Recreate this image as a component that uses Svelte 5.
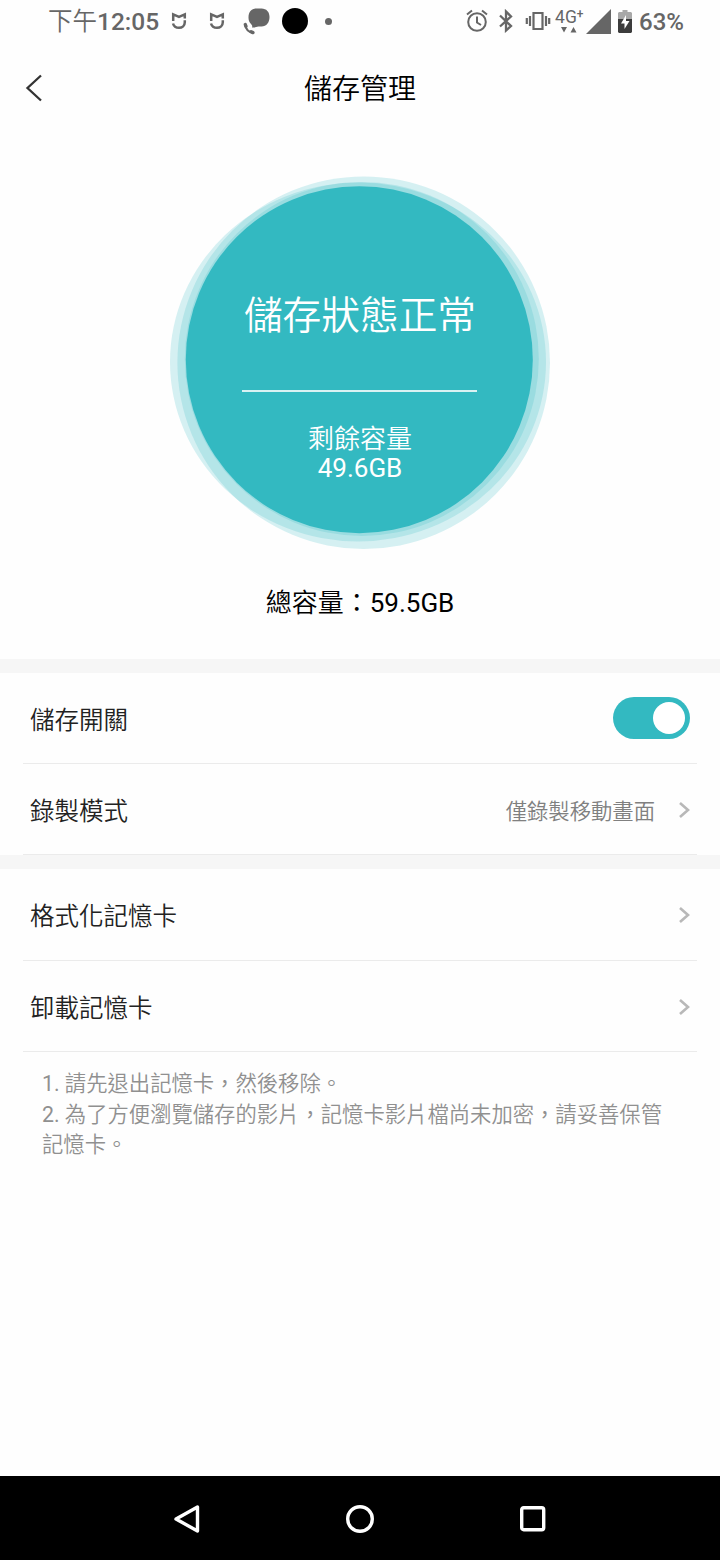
<script lang="ts">
  let recording = true;

  const notes = [
    '請先退出記憶卡，然後移除。',
    '為了方便瀏覽儲存的影片，記憶卡影片檔尚未加密，請妥善保管記憶卡。',
  ];
</script>

{#snippet mi()}
  <svg class="mi" width="16" height="18" viewBox="0 0 16 18">
    <path d="M2.200 9V2.300L8 4.800l5.800-2.500V6.500M13.800 8.200v2.100c0 3.200-2.600 5.500-5.800 5.500-2.900 0-5.200-1.500-6-4.300" />
  </svg>
{/snippet}

{#snippet chevron()}
  <svg class="chevron" width="12" height="18" viewBox="0 0 12 18"><path d="M2 2l8 7-8 7" /></svg>
{/snippet}

<div class="screen">
  <div class="status">
    <span class="clock">下午<b>12:05</b></span>
    {@render mi()}
    {@render mi()}
    <svg class="call" width="28" height="28" viewBox="0 0 28 28">
      <path d="M14.500 1.500h5c5 0 8 3.500 8 8.500 0 5.500-3 9.500-8 9.500h-3c-2.500 0-3.500 1.500-6.500 1 .5-1.300.3-2-1-3.500C7 15 6.500 13 6.500 10.500c0-5.500 3-9 8-9z" fill="#666" />
      <path d="M3 17.500c.7 4.500 3.800 7.800 8.500 8.500" fill="none" stroke="#666" stroke-width="2" />
      <path d="M3.300 17.500l.7 1.800M9.200 24.800l1.800.8" stroke="#666" stroke-width="3.400" stroke-linecap="round" />
    </svg>
    <span class="disc"></span>
    <span class="dot"></span>
    <div class="system">
      <svg class="alarm" width="22" height="24" viewBox="0 0 22 24">
        <g fill="none" stroke="#666" stroke-width="2">
          <circle cx="11" cy="13" r="8.800" />
          <path d="M11 7.500v6l4 2.500M1 5.500l5-4M21 5.500l-5-4" />
        </g>
      </svg>
      <svg class="bluetooth" width="16" height="24" viewBox="0 0 16 24">
        <path d="M2 6.500L13 17l-5 4.500v-19L13 7.500 2 17.500" fill="none" stroke="#666" stroke-width="2.300" />
      </svg>
      <svg class="vibrate" width="26" height="20" viewBox="0 0 26 20">
        <path d="M8.500 2h9v16h-9zM5 5v10M1.800 7v6M21 5v10M24.200 7v6" fill="none" stroke="#666" stroke-width="2.200" />
      </svg>
      <div class="network">
        <span>4G<sup>+</sup></span>
        <svg width="16" height="6" viewBox="0 0 16 6"><path d="M0 0h6L3 5.500zM9.500 5.500h6L12.500 0z" fill="#666" /></svg>
      </div>
      <svg class="signal" width="25" height="25" viewBox="0 0 25 25"><path d="M0 25L25 0v25z" fill="#666" /></svg>
      <svg class="battery" width="14" height="23" viewBox="0 0 14 23">
        <path d="M1 2h3.500V0h5v2H13l1 1v6H0V3z" fill="#a8a8a8" />
        <path d="M0 9h14v13l-1 1H1l-1-1z" fill="#3c3c3c" />
        <path d="M8 5l-5 8.500h3.500V19l5-8H8z" fill="#fff" />
      </svg>
      <b class="percent">63%</b>
    </div>
  </div>

  <header>
    <svg class="back" width="18" height="28" viewBox="0 0 18 28"><path d="M16 1.500L2.500 14 16 26.500" /></svg>
    <h1>儲存管理</h1>
  </header>

  <section class="summary">
    <div class="gauge">
      <svg class="rings" width="380" height="374" viewBox="170 176 380 374">
        <circle cx="363.700" cy="362.700" r="186.300" />
        <ellipse cx="358" cy="362" rx="188" ry="179.500" />
        <circle cx="361.800" cy="358.900" r="177" />
        <circle class="core" cx="359.300" cy="359.700" r="173.500" />
      </svg>
      <div class="state">儲存狀態正常</div>
      <div class="rule"></div>
      <div class="free">剩餘容量<span>49.6GB</span></div>
    </div>
    <p class="total">總容量：<span>59.5GB</span></p>
  </section>

  <section class="group">
    <div class="row">
      <span>儲存開關</span>
      <button
        class="toggle"
        class:on={recording}
        type="button"
        role="switch"
        aria-checked={recording}
        aria-label="儲存開關"
        on:click={() => (recording = !recording)}
      >
        <i></i>
      </button>
    </div>
    <div class="row">
      <span>錄製模式</span>
      <span class="value">僅錄製移動畫面</span>
      {@render chevron()}
    </div>
  </section>

  <section class="group card">
    <div class="row">
      <span>格式化記憶卡</span>
      {@render chevron()}
    </div>
    <div class="row">
      <span>卸載記憶卡</span>
      {@render chevron()}
    </div>
  </section>

  <div class="notes">
    {#each notes as note, i}
      <p><span>{i + 1}.</span> {note}</p>
    {/each}
  </div>

  <nav>
    <svg width="28" height="30" viewBox="0 0 28 30"><path d="M24.500 3v24L3 15z" /></svg>
    <svg width="30" height="30" viewBox="0 0 30 30"><circle cx="15" cy="15" r="12.300" /></svg>
    <svg width="28" height="28" viewBox="0 0 28 28"><rect x="2.700" y="2.700" width="22" height="22" rx="2" /></svg>
  </nav>
</div>

<style>
  :global(body) {
    margin: 0;
    background: #fefefe;
  }

  .screen {
    width: 720px;
    height: 1560px;
    display: flex;
    flex-direction: column;
    background: #fefefe;
    color: #000;
    font-family: Roboto, 'Noto Sans CJK TC', sans-serif;
    font-weight: 350;
    overflow: hidden;
  }

  svg {
    display: block;
    flex: none;
  }

  .status {
    height: 42px;
    flex: none;
    display: flex;
    align-items: center;
    padding: 0 36px 0 48px;
    color: #666;
    font-size: 24.500px;
  }

  .clock {
    width: 123px;
    white-space: nowrap;
    line-height: 42px;
    padding-top: 1px;
    box-sizing: border-box;
    height: 42px;
  }

  .status b {
    font-weight: 500;
  }

  .mi {
    margin-right: 22px;
  }

  .mi path {
    fill: none;
    stroke: #666;
    stroke-width: 2.500px;
  }

  .call {
    margin-left: -5px;
  }

  .disc {
    width: 26px;
    height: 26px;
    border-radius: 50%;
    background: #000;
    margin-left: 12px;
  }

  .dot {
    width: 7px;
    height: 7px;
    border-radius: 50%;
    background: #666;
    margin-left: 17px;
  }

  .system {
    margin-left: auto;
    display: flex;
    align-items: center;
  }

  .bluetooth {
    margin-left: 10px;
  }

  .vibrate {
    margin-left: 11px;
  }

  .network {
    width: 31px;
    height: 26px;
    margin-left: 4px;
    font-size: 17.500px;
    font-weight: 400;
    line-height: 18px;
    white-space: nowrap;
  }

  .network span {
    display: block;
    height: 19px;
  }

  .network sup {
    font-size: 12px;
    font-weight: 500;
    line-height: 0;
    vertical-align: 5px;
  }

  .network svg {
    margin-left: 6px;
  }

  .battery {
    margin-left: 7px;
  }

  .percent {
    margin-left: 7px;
    padding-top: 2px;
    font-size: 24px;
  }

  header {
    height: 92px;
    flex: none;
    display: grid;
    grid-template-columns: 1fr auto 1fr;
    align-items: center;
    padding: 0 25px;
  }

  .back path {
    fill: none;
    stroke: #333;
    stroke-width: 2.300px;
  }

  h1 {
    margin: 0;
    padding-top: 4px;
    font-size: 28px;
    font-weight: inherit;
    line-height: 40px;
  }

  .summary {
    height: 525px;
    flex: none;
    display: flex;
    flex-direction: column;
    align-items: center;
  }

  .gauge {
    position: relative;
    width: 380px;
    height: 374px;
    margin-top: 42px;
    display: flex;
    flex-direction: column;
    align-items: center;
    color: #fff;
  }

  .rings {
    position: absolute;
    inset: 0;
  }

  .rings * {
    fill: #33b9c1;
    fill-opacity: 0.2;
  }

  .rings .core {
    fill-opacity: 1;
  }

  .state,
  .rule,
  .free {
    position: relative;
  }

  .state {
    margin-top: 111px;
    font-size: 38.700px;
    line-height: 58px;
  }

  .rule {
    width: 235px;
    height: 2px;
    margin: 45px 2px 0 0;
    background: #d9f2f3;
  }

  .free {
    margin-top: 32px;
    font-size: 26px;
    line-height: 30px;
    text-align: center;
  }

  .free span {
    display: block;
    margin-top: -1px;
  }

  .free span,
  .total span,
  .notes span {
    font-weight: 400;
  }

  .total {
    margin: 34px 0 0;
    font-size: 26px;
    line-height: 38px;
  }

  .group {
    flex: none;
    padding: 0 23px;
    border-top: 14px solid #f6f6f6;
  }

  .row {
    height: 90px;
    display: flex;
    align-items: center;
    padding: 0 7px;
    border-bottom: 1px solid #ebebeb;
    color: #222;
    font-size: 24.500px;
  }

  .card .row:first-child {
    height: 91px;
  }

  .row > :first-child {
    margin-right: auto;
  }

  .value {
    color: #808080;
    font-size: 21.330px;
    margin-right: 23px;
  }

  .chevron {
    margin-top: 1px;
  }

  .chevron path {
    fill: none;
    stroke: #b8b8b8;
    stroke-width: 2.600px;
  }

  .toggle {
    width: 77px;
    height: 42px;
    padding: 5px;
    border: 0;
    border-radius: 21px;
    background: #ccc;
    display: flex;
    align-items: center;
  }

  .toggle i {
    width: 32px;
    height: 32px;
    border-radius: 50%;
    background: #fff;
  }

  .toggle.on {
    background: #33b9c1;
    justify-content: flex-end;
  }

  .notes {
    padding: 17px 42px 0;
    color: #909090;
    font-size: 21.330px;
    line-height: 30.500px;
  }

  .notes p {
    margin: 0;
  }

  nav {
    height: 84px;
    flex: none;
    margin-top: auto;
    display: flex;
    align-items: center;
    justify-content: center;
    gap: 144px;
    background: #000;
  }

  nav svg {
    margin-top: 1px;
  }

  nav svg * {
    fill: none;
    stroke: #fff;
    stroke-width: 3.400px;
    stroke-linejoin: round;
  }
</style>
